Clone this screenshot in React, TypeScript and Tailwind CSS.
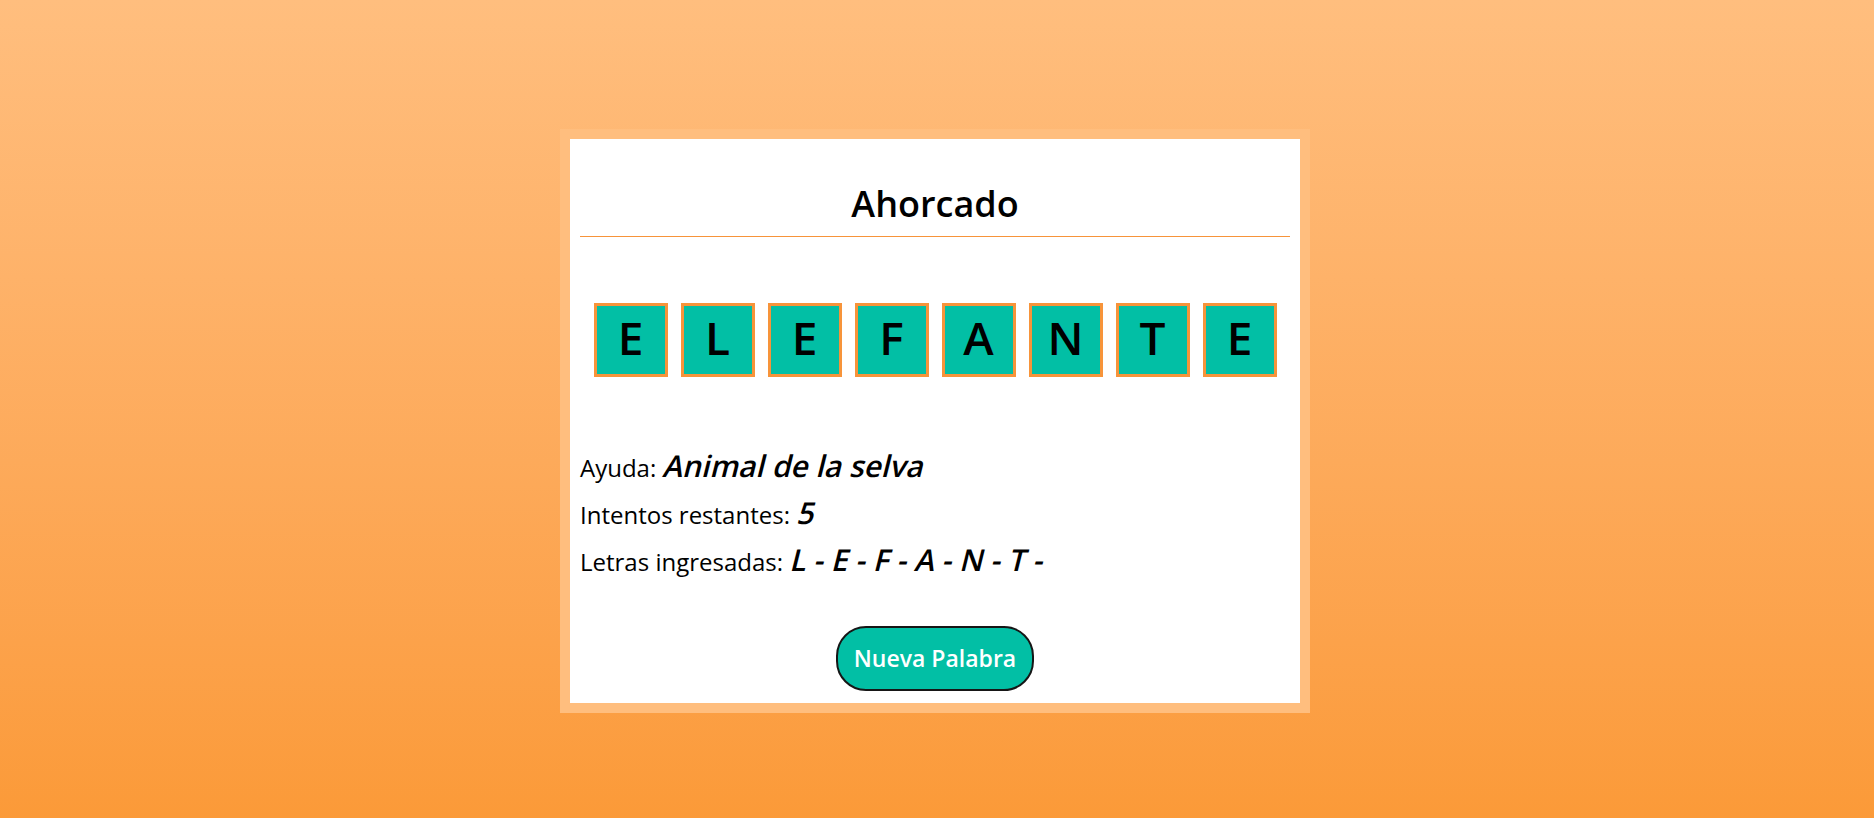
import React from 'react';

const WORD = ['E', 'L', 'E', 'F', 'A', 'N', 'T', 'E'];
const GUESSED = ['L', 'E', 'F', 'A', 'N', 'T'];

const Tile = ({ letter }: { letter: string }) => (
  <div className="flex h-[74px] w-[74px] items-center justify-center border-[3px] border-[#f7943a] bg-[#02bfa5] pb-[7px] text-[46px] font-semibold leading-none text-black">
    {letter}
  </div>
);

// el texto en cursiva es oblicua (la fuente recta inclinada)
const Dato = ({ children }: { children: React.ReactNode }) => (
  <span className="inline-block origin-[0_75%] -skew-x-[14deg] text-[30px] font-semibold">{children}</span>
);

const App = () => {
  return (
    <div
      className="flex min-h-screen justify-center bg-gradient-to-b from-[#ffbe7e] to-[#fb9a38] pr-1 pt-[129px]"
      style={{ fontFamily: '"Open Sans", "Liberation Sans", sans-serif' }}
    >
      <div className="h-[584px] w-[750px] border-[10px] border-[#ffbe7e] bg-white px-[10px]">
        {/* titulo */}
        <h1 className="mt-[40px] text-center text-[36px] font-semibold leading-[49px] text-black">Ahorcado</h1>
        <div className="mt-[8px] h-px bg-[#f7943a]" />

        {/* palabra */}
        <div className="mt-[66px] flex justify-center gap-[13px]">
          {WORD.map((l, i) => (
            <Tile key={i} letter={l} />
          ))}
        </div>

        {/* info */}
        <div className="mt-[66px] text-[24px] leading-[45px] text-black">
          <div>
            Ayuda: <Dato>Animal de la selva</Dato>
          </div>
          <div>
            Intentos restantes: <Dato>5</Dato>
          </div>
          <div>
            Letras ingresadas: <Dato>{GUESSED.map((l) => `${l} - `).join('')}</Dato>
          </div>
        </div>

        <div className="mt-[42px] flex justify-center">
          <button className="h-[65px] rounded-[30px] border-2 border-[#161616] bg-[#02bfa5] px-[16px] text-[23px] font-semibold text-white">
            Nueva Palabra
          </button>
        </div>
      </div>
    </div>
  );
};

export default App;
